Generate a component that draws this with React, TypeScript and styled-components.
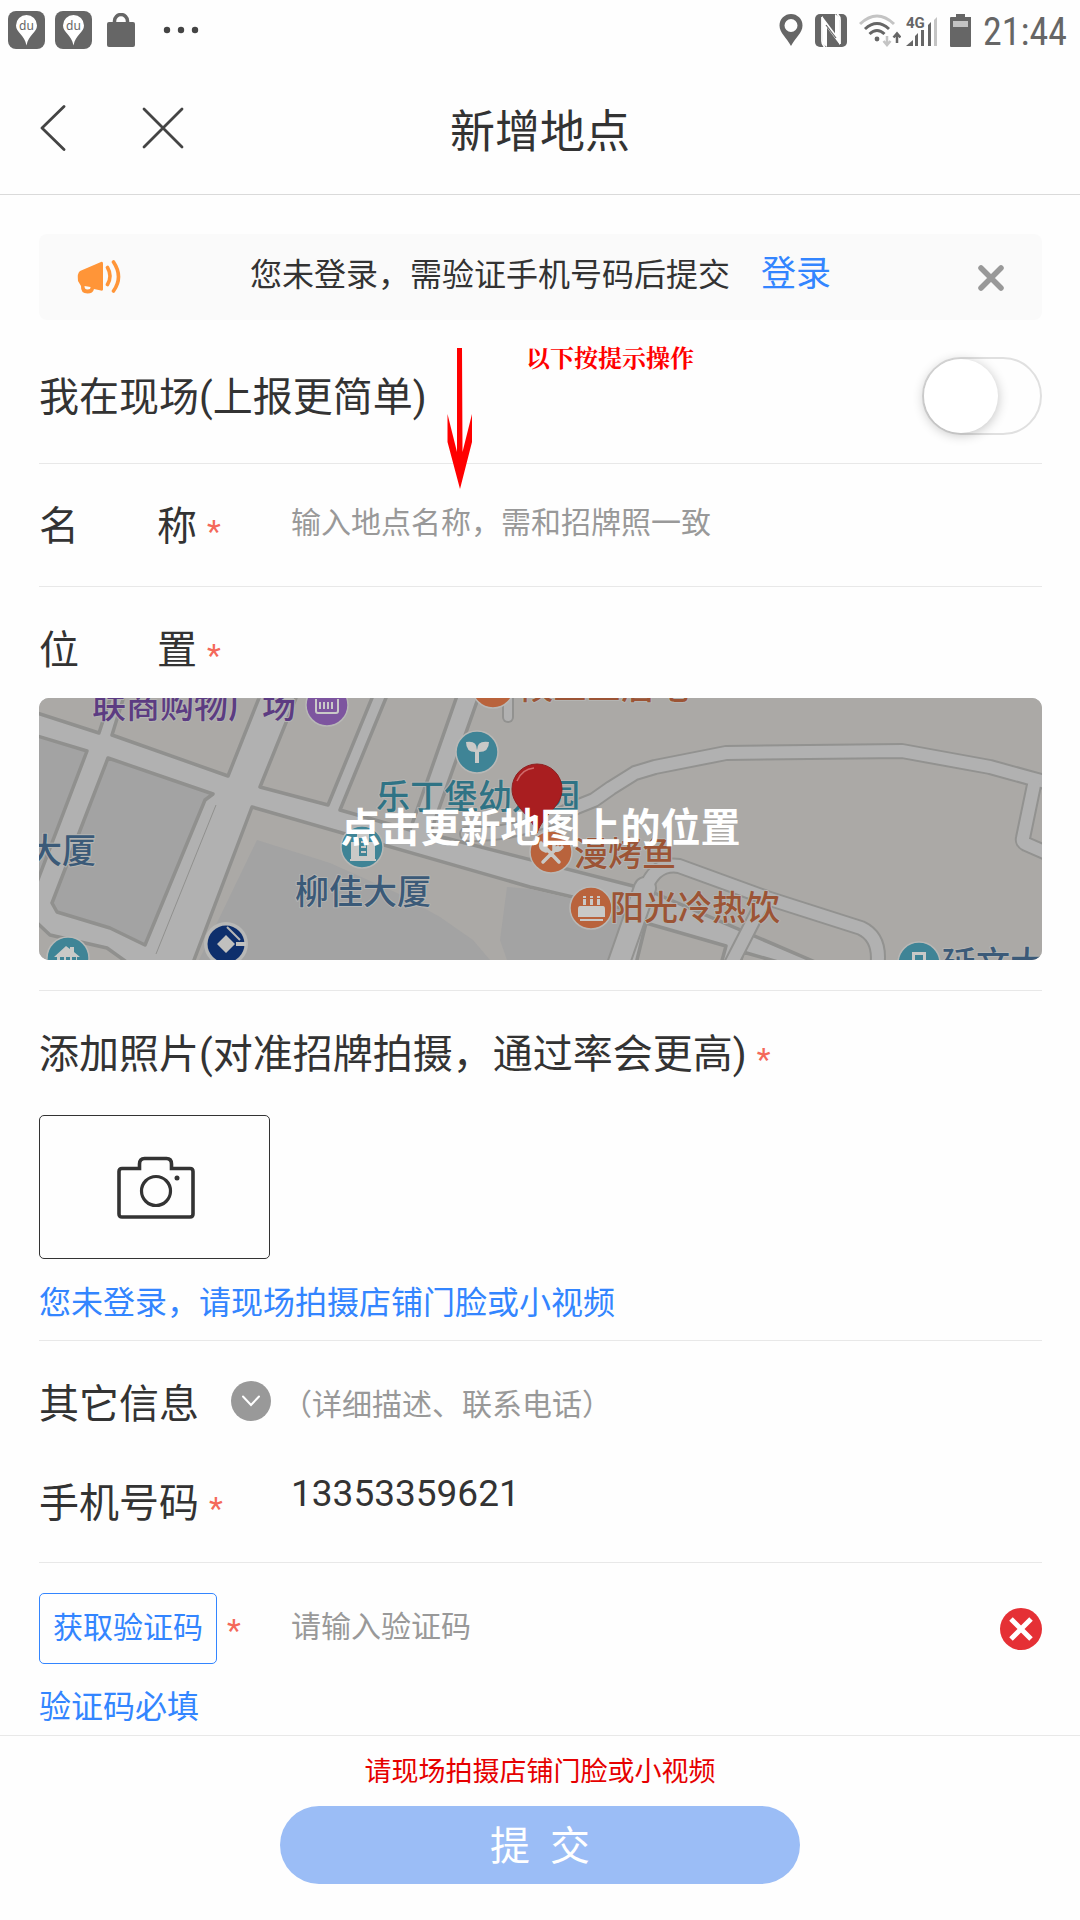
import React, { useState } from "react";
import styled, { createGlobalStyle } from "styled-components";

const ink = "#333333";
const blue = "#3385ff";
const grey = "#999999";
const line = "#e8e8e8";

const GlobalStyle = createGlobalStyle`
  *, *::before, *::after { box-sizing: border-box; }
  body {
    margin: 0;
    background: #fefefe;
    color: ${ink};
    font-family: Roboto, "Noto Sans CJK SC", sans-serif;
    font-size: 40px;
    line-height: 48px;
  }
  button, input { font: inherit; color: inherit; margin: 0; }
  button { padding: 0; border: 0; background: none; cursor: pointer; }
  svg { display: block; flex: none; }
`;

const Page = styled.div`
  display: flex;
  flex-direction: column;
  min-height: 100vh;
`;

const StatusBar = styled.div`
  display: flex;
  align-items: center;
  justify-content: space-between;
  height: 60px;
  padding: 0 13px 0 8px;
  color: #666666;
`;

const StatusGroup = styled.div<{ $gap: number }>`
  display: flex;
  align-items: center;
  gap: ${(p) => p.$gap}px;
`;

const Clock = styled.time`
  padding-top: 4px;
  font-family: "Roboto Condensed", Roboto, sans-serif;
  font-size: 38px;
  line-height: 56px;
`;

const Header = styled.header`
  display: grid;
  grid-template-columns: 1fr auto 1fr;
  align-items: center;
  height: 135px;
  padding: 2px 40px 0;
  border-bottom: 1px solid #dadada;
`;

const HeaderActions = styled.nav`
  display: flex;
  gap: 76px;
`;

const Title = styled.h1`
  margin: 0;
  padding-top: 10px;
  font-size: 45px;
  font-weight: 400;
`;

const Form = styled.form`
  display: flex;
  flex-direction: column;
  flex: 1;
`;

const Content = styled.main`
  position: relative;
  flex: 1;
  padding: 39px 38px 4px 39px;
`;

const Banner = styled.section`
  display: grid;
  grid-template-columns: 44px 1fr 44px;
  align-items: center;
  height: 86px;
  margin-bottom: 8px;
  padding: 0 38px;
  border-radius: 8px;
  background: #fafafa;
`;

const BannerText = styled.p`
  display: flex;
  align-items: center;
  justify-content: center;
  gap: 31px;
  margin: 0;
  padding-bottom: 4px;
  font-size: 32px;
`;

const LoginLink = styled.a`
  color: ${blue};
  font-size: 35px;
  text-decoration: none;
`;

const DismissButton = styled.button`
  justify-self: end;
  padding-top: 2px;
`;

const Row = styled.div<{ $height: number }>`
  display: flex;
  align-items: center;
  height: ${(p) => p.$height}px;
  border-bottom: 1px solid ${line};
`;

const Section = styled.section<{ $bottom: number; $rule?: boolean }>`
  padding: 38px 0 ${(p) => p.$bottom}px;
  border-bottom: ${(p) => (p.$rule === false ? "0" : `1px solid ${line}`)};
`;

const LabelLine = styled.div<{ $after: number }>`
  display: flex;
  align-items: center;
  margin-bottom: ${(p) => p.$after}px;
`;

const Label = styled.label`
  display: flex;
  justify-content: space-between;
  min-width: 158px;
  padding-top: 4px;
  line-height: 44px;
`;

const LabelCell = styled.div<{ $drop?: number }>`
  display: flex;
  align-items: center;
  flex: none;
  width: 252px;
  margin-top: ${(p) => p.$drop ?? 0}px;
`;

const Star = styled.span<{ $top?: number }>`
  padding: ${(p) => p.$top ?? 12}px 0 0 10px;
  color: #f4695a;
  font-size: 32px;
  line-height: 36px;
`;

const Field = styled.input<{ $size: number }>`
  flex: 1;
  min-width: 0;
  height: 60px;
  padding: 0 0 5px;
  border: 0;
  outline: 0;
  background: none;
  font-size: ${(p) => p.$size}px;
  &::placeholder { color: ${grey}; opacity: 1; }
`;

const Switch = styled.input`
  appearance: none;
  display: flex;
  width: 120px;
  height: 78px;
  margin: 0 0 0 auto;
  border: 2px solid #e0e0e0;
  border-radius: 39px;
  background: #fefefe;
  &::before {
    content: "";
    width: 74px;
    height: 74px;
    border-radius: 50%;
    background: #ffffff;
    box-shadow: 0 2px 12px rgba(0, 0, 0, 0.24);
  }
  &:checked { justify-content: flex-end; background: ${blue}; }
`;

const MapButton = styled.button`
  position: relative;
  display: grid;
  width: 100%;
  height: 262px;
  overflow: hidden;
  border-radius: 10px;
`;

const MapArt = styled.svg`
  width: 100%;
  height: 262px;
`;

const MapCaption = styled.span`
  position: absolute;
  inset: 0;
  display: flex;
  align-items: center;
  justify-content: center;
  color: #ffffff;
  font-weight: 700;
`;

const PhotoButton = styled.button`
  display: flex;
  align-items: center;
  justify-content: center;
  width: 231px;
  height: 144px;
  padding: 2px 0 0 2px;
  border: 1px solid ${ink};
  border-radius: 5px;
`;

const Hint = styled.p<{ $before: number }>`
  margin: ${(p) => p.$before}px 0 0;
  color: ${blue};
  font-size: 32px;
`;

const MoreButton = styled.button`
  display: grid;
  place-items: center;
  width: 40px;
  height: 40px;
  margin: 0 11px 4px 32px;
  border-radius: 50%;
  background: ${grey};
`;

const MoreNote = styled.span`
  padding-top: 4px;
  color: ${grey};
  font-size: 30px;
  line-height: 44px;
`;

const PhoneRow = styled.div`
  display: flex;
  align-items: flex-start;
  height: 100px;
  padding-top: 3px;
  border-bottom: 1px solid ${line};
`;

const CodeRow = styled.div`
  display: flex;
  align-items: center;
  padding-top: 30px;
`;

const CodeButton = styled.button`
  width: 178px;
  height: 71px;
  padding-bottom: 2px;
  border: 1px solid ${blue};
  border-radius: 5px;
  color: ${blue};
  font-size: 30px;
`;

const Footer = styled.footer`
  display: flex;
  flex-direction: column;
  align-items: center;
  gap: 10px;
  padding: 12px 0 36px;
  border-top: 1px solid ${line};
`;

const Warning = styled.p`
  margin: 0;
  color: #e60000;
  font-size: 27px;
`;

const Submit = styled.button`
  width: 520px;
  height: 78px;
  padding-top: 3px;
  border-radius: 39px;
  background: #9bbdf6;
  color: #ffffff;
  white-space: pre;
`;

const ArrowMark = styled.svg`
  position: absolute;
  left: 447px;
  top: 153px;
  pointer-events: none;
`;

const NoteMark = styled.span`
  position: absolute;
  left: 526px;
  top: 138px;
  color: #ff0000;
  font-family: "Noto Serif CJK SC", "Liberation Serif", "Noto Sans CJK SC", serif;
  font-size: 24px;
  font-weight: 700;
`;

const MapsBadge = () => (
  <svg width="37" height="38" viewBox="0 0 37 38">
    <rect width="37" height="38" rx="8" fill="#666" />
    <path d="M18.500 4a10.500 10.500 0 0 0-10.500 10.500c0 7 8.500 9 10.500 20 2-11 10.500-13 10.500-20A10.500 10.500 0 0 0 18.500 4z" fill="#fff" />
    <text x="18.500" y="19" fontSize="12" textAnchor="middle" fill="#666" fontFamily="Noto Sans, sans-serif">du</text>
  </svg>
);

const Bag = () => (
  <svg width="28" height="34" viewBox="0 0 28 34">
    <path d="M7.500 12V8a6.500 6.500 0 0 1 13 0v4" fill="none" stroke="#666" strokeWidth="3.500" />
    <rect y="9" width="28" height="25" rx="2" fill="#666" />
  </svg>
);

const Dots = () => (
  <svg width="36" height="8" viewBox="0 0 36 8">
    {[4, 18, 32].map((x) => <circle key={x} cx={x} cy="4" r="3.200" fill="#444" />)}
  </svg>
);

const StatusPin = () => (
  <svg width="24" height="32" viewBox="0 0 24 32">
    <path fillRule="evenodd" d="M12 0A11.500 11.500 0 0 0 .5 11.500C.5 19 8 24 12 32c4-8 11.500-13 11.500-20.500A11.500 11.500 0 0 0 12 0zm0 5a6.500 6.500 0 1 1 0 13 6.500 6.500 0 0 1 0-13z" fill="#666" />
  </svg>
);

const Nfc = () => (
  <svg width="32" height="33" viewBox="0 0 32 33">
    <rect width="32" height="33" rx="5" fill="#666" />
    <path d="M7 3v24q0 4 3 6M25 30V6q0-4-3-6" fill="none" stroke="#fff" strokeWidth="1.800" />
    <path d="M7 2L12 12V33L8 30zM25 31L20 21V0L24 3z" fill="#fff" />
    <path d="M7 2L25 26V31L7 7z" fill="#fff" />
    <path d="M11 11L21 24" stroke="#666" strokeWidth="1.200" />
  </svg>
);

const Wifi = () => (
  <svg width="42" height="33" viewBox="0 0 42 33">
    <g fill="none" strokeWidth="3">
      <path d="M1 10Q18-6 35 10" stroke="#c4c4c4" />
      <path d="M6 15Q18 4 30 15" stroke="#666" />
      <path d="M10.500 20Q18 13 25.500 20" stroke="#666" />
    </g>
    <circle cx="18" cy="25" r="2.400" fill="#666" />
    <path d="M28 22v8M24.500 27l3.500 4 3.500-4" stroke="#c4c4c4" strokeWidth="2.500" fill="none" />
    <path d="M38 29v-9M34.500 23.500l3.500-4 3.500 4" stroke="#666" strokeWidth="2.500" fill="none" />
  </svg>
);

const Signal = () => (
  <svg width="32" height="33" viewBox="0 0 32 33">
    <text x="0" y="14" fontSize="15" fontWeight="700" fill="#666" fontFamily="Roboto, sans-serif">4G</text>
    <path d="M0 32l7-6v6z" fill="#666" />
    <path d="M9 32V22l3-3v13zM15 32V16h3v16zM22 32V11l3-3v24z" fill="#666" />
    <path d="M28 32V6l3-3v29z" fill="#c4c4c4" />
  </svg>
);

const Battery = () => (
  <svg width="21" height="33" viewBox="0 0 21 33">
    <path d="M6 0h9v3h6v29a1 1 0 0 1-1 1H1a1 1 0 0 1-1-1V4a1 1 0 0 1 1-1h5z" fill="#666" />
    <rect x="3" y="7" width="15" height="6" fill="#c4c4c4" />
  </svg>
);

const BackIcon = () => (
  <svg width="26" height="46" viewBox="0 0 26 46">
    <path d="M24 1.500L2 23l22 21.500" fill="none" stroke="#444" strokeWidth="2.800" strokeLinecap="round" strokeLinejoin="round" />
  </svg>
);

const CloseIcon = () => (
  <svg width="42" height="42" viewBox="0 0 42 42">
    <path d="M2 2l38 38M40 2L2 40" stroke="#444" strokeWidth="2.800" strokeLinecap="round" />
  </svg>
);

const Horn = () => (
  <svg width="44" height="34" viewBox="0 0 44 34">
    <path d="M3 11L24 2q2-.8 2 1.500v26q0 1.500-2 1L17 29q-1 4.500-6.500 4.500-7 0-6.500-7.500L1 21q-1-8 2-10zM7.500 26q0 3.500 3 3.500 3.300 0 3-2.500z" fill="#ff9538" fillRule="evenodd" />
    <path d="M30.500 7.500q5 8.500 0 17M36.500 2q10 15 0 29" fill="none" stroke="#ff9538" strokeWidth="3.600" strokeLinecap="round" />
  </svg>
);

const DismissIcon = () => (
  <svg width="26" height="26" viewBox="0 0 26 26">
    <path d="M3 3l20 20M23 3L3 23" stroke="#999" strokeWidth="5.500" strokeLinecap="round" />
  </svg>
);

const Camera = () => (
  <svg width="78" height="64" viewBox="0 0 78 64">
    <path d="M5 12.500h17.500V8q0-5.500 5-5.500h22q5 0 5 5.500v4.500H73q3 0 3 3V58q0 3-3 3H5q-3 0-3-3V15.500q0-3 3-3z" fill="none" stroke="#333" strokeWidth="3.600" />
    <circle cx="39" cy="35" r="14.500" fill="none" stroke="#333" strokeWidth="3.200" />
    <circle cx="60" cy="22" r="2.500" fill="#333" />
  </svg>
);

const Chevron = () => (
  <svg width="20" height="12" viewBox="0 0 20 12">
    <path d="M2 1.500l8 8.500 8-8.500" fill="none" stroke="#fff" strokeWidth="2" strokeLinecap="round" />
  </svg>
);

const ErrorIcon = () => (
  <svg width="42" height="42" viewBox="0 0 42 42">
    <circle cx="21" cy="21" r="21" fill="#e53035" />
    <path d="M11 11l20 20M31 11L11 31" stroke="#fff" strokeWidth="5" />
  </svg>
);

const blocks: Array<[string, string]> = [
  ["-5,14 60,35 73,-5 -5,-5", "#aba9a6"],
  ["73,37 189,78 222,-5 86,-5", "#aba9a6"],
  ["221,89 289,107 335,-5 259,-5", "#aba9a6"],
  ["301,112 349,-5 419,-5 371,132", "#aba9a6"],
  ["391,136 441,-5 1010,-5 1010,270 790,270 606,191", "#aba9a6"],
  ["-5,37 48,53 -5,192", "#a3a3a3"],
  ["69,60 174,96 166,102 106,247 71,230 18,214 13,205", "#a3a3a3"],
  ["-5,222 11,237 68,250 96,270 -5,270", "#aba9a6"],
  ["213,109 491,189 589,212 568,270 152,270", "#aba9a6"],
  ["607,225 687,248 681,270 596,270", "#aba9a6"],
  ["704,254 760,270 700,270", "#aba9a6"],
];

const roads: Array<[string, number]> = [
  ["M428 136Q480 138 535 110L555 102L572 90L596 75L616 69L687 55L863 53L951 69L991 80L1010 85", 12],
  ["M995 87L984 140Q983 144 987 146L1010 156", 12],
  ["M606 192Q616 164 640 168L728 200L822 230Q843 240 838 270", 12],
  ["M606 190L578 270", 20],
  ["M726 200L690 270", 12],
  ["M469 -5V19", 8],
];

const mapLabels: Array<[string, number, number, string]> = [
  ["联商购物广场", 53, 20, "#5c3c82"],
  ["候三三居地", 480, 1, "#9c5435"],
  ["乐丁堡幼儿园", 337, 111, "#2f7385"],
  ["大厦", -11, 165, "#3b5a78"],
  ["柳佳大厦", 256, 206, "#3b5a78"],
  ["漫烤鱼", 535, 168, "#9c5435"],
  ["阳光冷热饮", 571, 222, "#9c5435"],
  ["延文大厦", 903, 278, "#3b5a78"],
];

const pois: Array<[number, number, string]> = [
  [288, 7, "#7d559f"],
  [454, -11, "#b9633c"],
  [438, 54, "#3f8496"],
  [323, 149, "#3f8496"],
  [29, 260, "#3f8496"],
  [512, 154, "#b9633c"],
  [552, 210, "#b9633c"],
  [880, 265, "#3f8496"],
];

const CityMap = () => (
  <MapArt viewBox="0 0 1003 262" preserveAspectRatio="xMidYMid slice" aria-hidden="true">
    <rect width="1003" height="262" fill="#b1b1b1" />
    {blocks.map(([points, fill]) => (
      <polygon key={points} points={points} fill={fill} stroke="#90908e" strokeWidth="3.500" strokeLinejoin="round" />
    ))}
    <path d="M218 142L291 165L358 195L401 219L434 242L451 262H160zM468 189L461 242L468 262H569L586 213L491 191z" fill="#a3a3a3" />
    <path d="M177 107L117 256" stroke="#90908e" strokeWidth="1" />
    {roads.map(([d, w]) => <path key={d} d={d} fill="none" stroke="#929290" strokeWidth={w + 4} strokeLinejoin="round" strokeLinecap="round" />)}
    {roads.map(([d, w]) => <path key={d} d={d} fill="none" stroke="#b1b1b1" strokeWidth={w} strokeLinejoin="round" strokeLinecap="round" />)}
    {pois.map(([x, y, fill]) => <circle key={x} cx={x} cy={y} r="21" fill={fill} stroke="#b8b8b6" strokeWidth="1.500" />)}
    <g fill="#c9c9c7">
      <path d="M277 1v12q0 2 2 2h18q2 0 2-2V1" fill="none" stroke="#c9c9c7" strokeWidth="2" />
      <path d="M280 4h2v7h-2zM284 4h2v7h-2zM288 4h2v7h-2zM292 4h2v7h-2z" />
      <path d="M427 44q11-2 11 8 0-10 12-8 0 10-10 10v11h-4V54q-9 0-9-10z" />
      <path d="M312 161v-17h6v-9l6-3 6 3v9h6v17h1v2h-26v-2zM320 140v18h8v-18zM322 143h5v2h-5zM322 148h5v2h-5zM322 153h5v2h-5z" fillRule="evenodd" />
      <path d="M15 259l12-11 4 3v-2h4v5l6 5h-3v10H18v-10zM21 259h4v4h-4zM27 259h4v4h-4zM33 259h4v4h-4z" fillRule="evenodd" />
      <path d="M541 208h23q2 0 2 3v8h-27v-8q0-3 2-3zM541 221h23v2h-23zM544 201h3v6h-3zM551 201h3v6h-3zM558 201h3v6h-3zM544 198h3v2h-3zM551 198h3v2h-3zM558 198h3v2h-3z" />
      <path d="M873 266v-12h14v12zM876 257v6h8v-6z" fillRule="evenodd" />
    </g>
    <path d="M503 146L520 164M504 164L519 149M515 145v6q4 3 8-2M502 145q-2 6 5 8" fill="none" stroke="#c9c9c7" strokeWidth="3.500" strokeLinecap="round" />
    <circle cx="187" cy="246" r="22" fill="#b8b8b6" />
    <circle cx="187" cy="246" r="18.500" fill="#0e2f6c" />
    <path d="M187 237l9 9-9 9-9-9zM197 244h10v4h-10z" fill="#c0c0be" />
    <path d="M188 229l13 13" fill="none" stroke="#b8b8b6" strokeWidth="2" />
    <g fontSize="34" fontWeight="500" fontFamily="Noto Sans CJK SC, sans-serif" stroke="#b4b4b2" strokeWidth="2" strokeLinejoin="round" paintOrder="stroke">
      {mapLabels.map(([text, x, y, fill]) => <text key={text} x={x} y={y} fill={fill}>{text}</text>)}
    </g>
    <path d="M498 66a25 25 0 0 0-25 25c0 18 18 24 25 44 7-20 25-26 25-44a25 25 0 0 0-25-25z" fill="#a91e20" stroke="#8d2020" strokeWidth="1" />
    <path d="M478 83q5-12 17-13" fill="none" stroke="#cf6a6a" strokeWidth="1.500" />
  </MapArt>
);

export default function App() {
  const [onSite, setOnSite] = useState(false);
  const [name, setName] = useState("");
  const [phone, setPhone] = useState("13353359621");
  const [code, setCode] = useState("");

  return (
    <>
      <GlobalStyle />
      <Page>
        <StatusBar>
          <StatusGroup $gap={15}>
            <StatusGroup $gap={10}>
              <MapsBadge />
              <MapsBadge />
            </StatusGroup>
            <StatusGroup $gap={28}>
              <Bag />
              <Dots />
            </StatusGroup>
          </StatusGroup>
          <StatusGroup $gap={12}>
            <StatusPin />
            <Nfc />
            <StatusGroup $gap={5}>
              <Wifi />
              <Signal />
            </StatusGroup>
            <Battery />
            <Clock>21:44</Clock>
          </StatusGroup>
        </StatusBar>

        <Header>
          <HeaderActions>
            <button type="button" aria-label="返回"><BackIcon /></button>
            <button type="button" aria-label="关闭"><CloseIcon /></button>
          </HeaderActions>
          <Title>新增地点</Title>
        </Header>

        <Form onSubmit={(e) => e.preventDefault()}>
          <Content>
            <Banner>
              <Horn />
              <BannerText>
                <span>您未登录，需验证手机号码后提交</span>
                <LoginLink href="#login">登录</LoginLink>
              </BannerText>
              <DismissButton type="button" aria-label="关闭提示"><DismissIcon /></DismissButton>
            </Banner>

            <Row $height={136}>
              <Label htmlFor="on-site">我在现场(上报更简单)</Label>
              <Switch id="on-site" type="checkbox" role="switch" checked={onSite} onChange={(e) => setOnSite(e.target.checked)} />
            </Row>

            <Row $height={123}>
              <LabelCell>
                <Label htmlFor="place-name"><span>名</span><span>称</span></Label>
                <Star>*</Star>
              </LabelCell>
              <Field id="place-name" $size={30} value={name} placeholder="输入地点名称，需和招牌照一致" onChange={(e) => setName(e.target.value)} />
            </Row>

            <Section $bottom={30}>
              <LabelLine $after={25}>
                <Label htmlFor="place-map"><span>位</span><span>置</span></Label>
                <Star>*</Star>
              </LabelLine>
              <MapButton id="place-map" type="button">
                <CityMap />
                <MapCaption>点击更新地图上的位置</MapCaption>
              </MapButton>
            </Section>

            <Section $bottom={13}>
              <LabelLine $after={38}>
                <Label htmlFor="add-photo">添加照片(对准招牌拍摄，通过率会更高)</Label>
                <Star>*</Star>
              </LabelLine>
              <PhotoButton id="add-photo" type="button"><Camera /></PhotoButton>
              <Hint $before={20}>您未登录，请现场拍摄店铺门脸或小视频</Hint>
            </Section>

            <Section $bottom={0} $rule={false}>
              <LabelLine $after={36}>
                <Label htmlFor="more-info">其它信息</Label>
                <MoreButton id="more-info" type="button"><Chevron /></MoreButton>
                <MoreNote>（详细描述、联系电话）</MoreNote>
              </LabelLine>
            </Section>

            <PhoneRow>
              <LabelCell $drop={12}>
                <Label htmlFor="phone">手机号码</Label>
                <Star>*</Star>
              </LabelCell>
              <Field id="phone" type="tel" $size={37} value={phone} onChange={(e) => setPhone(e.target.value)} />
            </PhoneRow>

            <CodeRow>
              <LabelCell>
                <CodeButton type="button">获取验证码</CodeButton>
                <Star $top={2}>*</Star>
              </LabelCell>
              <Field aria-label="验证码" $size={30} value={code} placeholder="请输入验证码" onChange={(e) => setCode(e.target.value)} />
              <ErrorIcon />
            </CodeRow>
            <Hint $before={19}>验证码必填</Hint>

            <ArrowMark width="26" height="142" viewBox="0 0 26 142">
              <path d="M10 0h5l.5 104L25 66v28L13 141 .5 94V66l9.500 38z" fill="#ff0000" />
            </ArrowMark>
            <NoteMark>以下按提示操作</NoteMark>
          </Content>

          <Footer>
            <Warning>请现场拍摄店铺门脸或小视频</Warning>
            <Submit type="submit">{"提  交"}</Submit>
          </Footer>
        </Form>
      </Page>
    </>
  );
}
